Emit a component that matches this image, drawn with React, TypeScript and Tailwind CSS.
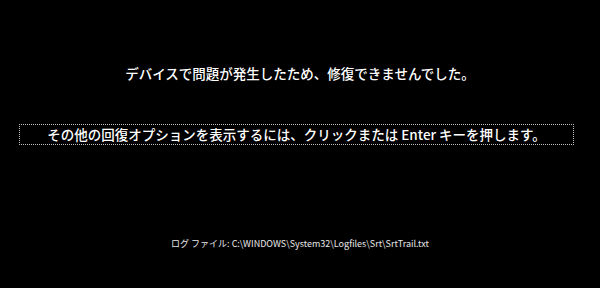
export default function App() {
  return (
    <div
      className="w-[600px] h-[288px] bg-black text-white flex flex-col items-center overflow-hidden"
      style={{ fontFamily: '"Noto Sans CJK JP", "Noto Sans", sans-serif' }}
    >
      <div className="mt-[63px] h-[20px] leading-[20px] text-[13.5px] font-medium">
        デバイスで問題が発生したため、修復できませんでした。
      </div>
      <div className="mt-[41px] self-start ml-[19px] w-[555px] h-[21px] border border-dotted border-[#bdbdbd] flex items-center justify-center text-[13.5px] font-medium leading-[19px]">
        その他の回復オプションを表示するには、クリックまたは Enter キーを押します。
      </div>
      <div className="mt-[92px] text-[9px] leading-[14px] text-[#e8e8e8]">
        ログ ファイル: C:\WINDOWS\System32\Logfiles\Srt\SrtTrail.txt
      </div>
    </div>
  );
}
